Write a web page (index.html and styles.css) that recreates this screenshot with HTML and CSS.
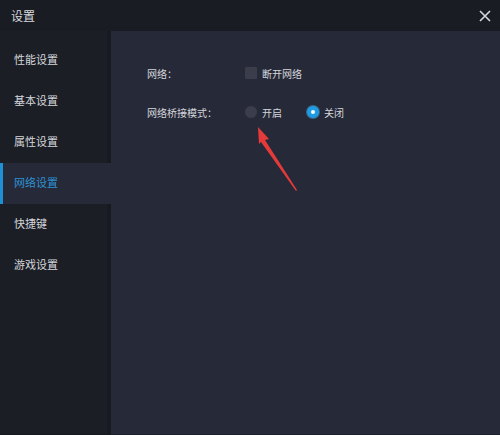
FILE: index.html
```html
<!DOCTYPE html>
<html lang="zh-CN">
<head>
    <meta charset="UTF-8">
    <title>设置</title>
    <link rel="stylesheet" href="styles.css">
</head>
<body>
    <div class="dialog">
        <header class="title_bar">
            <span class="title">设置</span>
            <span class="close_btn">
                <svg width="12" height="12" viewBox="0 0 12 12">
                    <path d="M1 1 L11 11 M11 1 L1 11" stroke="#d6d8de" stroke-width="1.6" fill="none"/>
                </svg>
            </span>
        </header>
        <div class="dialog_body">
            <nav class="side_menu">
                <div class="menu_item">性能设置</div>
                <div class="menu_item">基本设置</div>
                <div class="menu_item">属性设置</div>
                <div class="menu_item active">网络设置</div>
                <div class="menu_item">快捷键</div>
                <div class="menu_item">游戏设置</div>
            </nav>
            <main class="panel">
                <div class="form_row">
                    <span class="row_label">网络：</span>
                    <label class="option">
                        <span class="checkbox"></span>
                        <span>断开网络</span>
                    </label>
                </div>
                <div class="form_row">
                    <span class="row_label">网络桥接模式：</span>
                    <label class="option">
                        <span class="radio"></span>
                        <span>开启</span>
                    </label>
                    <label class="option">
                        <span class="radio checked"></span>
                        <span>关闭</span>
                    </label>
                </div>

                <!-- red pointer arrow -->
                <svg class="pointer" width="60" height="80" viewBox="0 0 60 80">
                    <path d="M7 10 L18 22 L14 23 L46 73 L45 74 L10 25 L8 27 Z" fill="#e53a3a"/>
                </svg>
            </main>
        </div>
    </div>
</body>
</html>
```

FILE: styles.css
```css
body {
    margin: 0;
    font-family: "Noto Sans CJK SC", "Noto Sans", sans-serif;
    background: #262938;
}

.dialog {
    width: 500px;
    height: 435px;
    display: flex;
    flex-direction: column;
    background: #262938;
    overflow: hidden;
}

.title_bar {
    height: 31px;
    flex-shrink: 0;
    display: flex;
    align-items: center;
    justify-content: space-between;
    padding: 0 9px 0 11px;
    background: #1a1c24;
}

.title {
    font-size: 12px;
    color: #d7d9de;
}

.close_btn {
    display: flex;
    align-items: center;
}

.dialog_body {
    flex: 1;
    display: flex;
}

.side_menu {
    width: 107px;
    padding-top: 9px;
    background: #1b1e25;
    border-right: 4px solid #181a21;
    border-bottom: 1px solid #16181e;
}

.menu_item {
    height: 41px;
    box-sizing: border-box;
    display: flex;
    align-items: center;
    padding: 0 0 3px 14px;
    font-size: 11px;
    color: #d4d6db;
    margin-right: -4px;
}

.menu_item.active {
    background: #262938;
    color: #2d91d2;
    border-left: 3px solid #1f8fd6;
    padding-left: 11px;
}

.panel {
    flex: 1;
    position: relative;
    padding: 35px 0 0 36px;
    border-bottom: 1px solid #1e2029;
}

.form_row {
    display: flex;
    align-items: center;
    height: 14px;
    margin-bottom: 25px;
    font-size: 10px;
    color: #d4d6db;
}

.row_label {
    width: 98px;
}

.option {
    display: flex;
    align-items: center;
    gap: 5px;
    margin-right: 25px;
}

.checkbox {
    width: 12px;
    height: 12px;
    background: #3b3e4a;
    border-radius: 1px;
}

.radio {
    width: 12px;
    height: 12px;
    border-radius: 50%;
    background: #3b3e4a;
    box-sizing: border-box;
}

.radio.checked {
    background: #fff;
    border: 4px solid #1d9be3;
    box-shadow: 0 0 0 1px rgba(90, 180, 240, 0.45);
}

.pointer {
    position: absolute;
    left: 140px;
    top: 86px;
}
```
